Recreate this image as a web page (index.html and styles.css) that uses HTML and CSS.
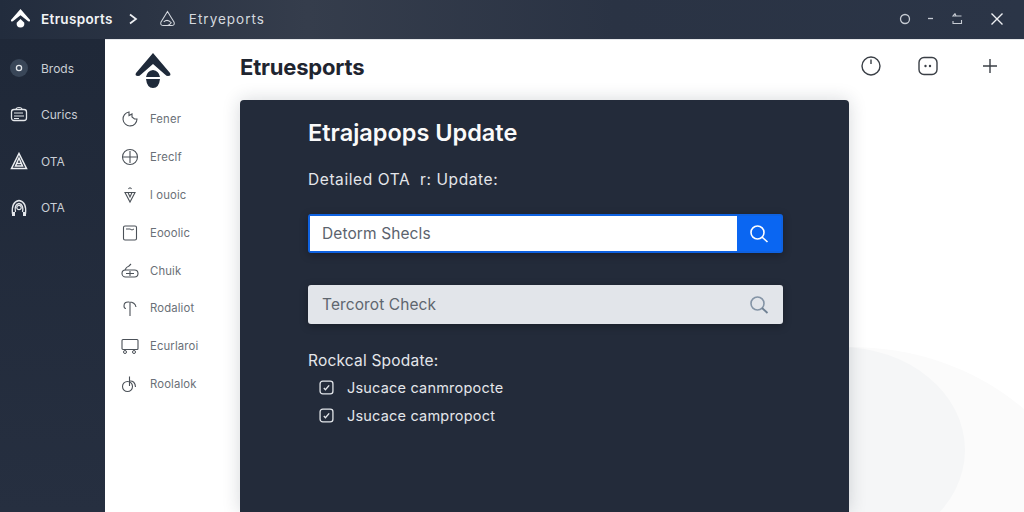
FILE: index.html
```html
<!DOCTYPE html>
<html lang="en">
<head>
<meta charset="utf-8">
<title>Etrusports</title>
<link rel="stylesheet" href="styles.css">
</head>
<body>
<div class="app">
  <header class="topbar">
    <svg class="logo-top" viewBox="0 0 22 22"><path d="M11 1 L21 12.500 Q21.500 14.500 19 14 L11 7.500 L3 14 Q.5 14.500 1 12.500Z" fill="#fff"/><path d="M7 15.500 L11 11.500 L15 15.500 Q15.500 20.500 11 20.500 Q6.500 20.500 7 15.500Z" fill="#fff"/></svg>
    <span class="brand">Etrusports</span>
    <svg class="chev" viewBox="0 0 10 12"><path d="M2 1.500 L8 6 L2 10.500" fill="none" stroke="#eef0f3" stroke-width="1.700"/></svg>
    <svg class="crumb-icon" viewBox="0 0 18 18"><path d="M9 1.500 L16 13 Q17 16.500 13 16.500 L5 16.500 Q1 16.500 2 13Z M5 12.500 Q9 9 13 13.500 Q11 16 9 16.500" fill="none" stroke="#d5d9df" stroke-width="1.100"/></svg>
    <span class="crumb">Etryeports</span>
    <div class="win">
      <svg class="w1" viewBox="0 0 12 12"><circle cx="6" cy="6" r="4.500" fill="none" stroke="#c6cbd3" stroke-width="1.300"/></svg>
      <svg class="w2" viewBox="0 0 7 3"><path d="M1 1.500 H6" stroke="#c6cbd3" stroke-width="1.300"/></svg>
      <svg class="w3" viewBox="0 0 12 12"><path d="M4 .500 L2 3 H10.500 M2 8 V10.500 H10.500 V7 M4 .500 L5 3" fill="none" stroke="#c6cbd3" stroke-width="1.100"/></svg>
      <svg class="w4" viewBox="0 0 14 14"><path d="M1.500 1.500 L12.500 12.500 M12.500 1.500 L1.500 12.500" stroke="#eef0f3" stroke-width="1.400"/></svg>
    </div>
  </header>
  <div class="body">
    <nav class="side">
      <a class="side-item"><svg viewBox="0 0 18 18"><circle cx="9" cy="9" r="9" fill="#394658"/><circle cx="9" cy="9" r="2.600" fill="none" stroke="#e4e7eb" stroke-width="1.300"/></svg>Brods</a>
      <a class="side-item"><svg viewBox="0 0 18 18"><rect x="1.500" y="3.500" width="15" height="11" rx="2.500" fill="none" stroke="#e4e7eb" stroke-width="1.300"/><path d="M6 3.500 Q6 1.500 9 1.500 Q12 1.500 12 3.500 M4 7 H13 M4 10 H14 M4 12.500 H9" fill="none" stroke="#e4e7eb" stroke-width="1.100"/></svg>Curics</a>
      <a class="side-item"><svg viewBox="0 0 18 18"><path d="M9 1.500 L16.500 16.500 H1.500Z M9 6 L12.500 14 H5.500Z M6.500 11.500 H11.500" fill="none" stroke="#eef0f3" stroke-width="1.500"/></svg>OTA</a>
      <a class="side-item"><svg viewBox="0 0 18 18"><path d="M2.500 15 Q1 3 9 1.500 Q17 3 15.500 15 M5.500 13 Q4 5.500 9 4.500 Q14 5.500 12.500 13" fill="none" stroke="#e4e7eb" stroke-width="1.300"/><circle cx="9" cy="8.500" r="2.200" fill="none" stroke="#e4e7eb" stroke-width="1.200"/><path d="M2 13 H5 V17 H2Z M13 13 H16 V17 H13Z" fill="#e4e7eb"/></svg>OTA</a>
    </nav>
    <div class="sheet">
      <span class="blob blob-a"></span>
      <span class="blob blob-b"></span>
      <aside class="sub">
        <svg class="logo-sub" viewBox="0 0 38 38"><path d="M19 1 L36 21 Q37.500 24 34 24 Q32.500 24 31 22.500 L19 12 L7 22.500 Q5.500 24 4 24 Q.500 24 2 21Z" fill="#1f2a3a"/><path d="M12 25 Q13 19 19 18 Q25 19 26 25Z M12 27 H26 Q25 36 19 36 Q13 36 12 27Z" fill="#1f2a3a"/></svg>
        <ul class="sub-list">
          <li><svg viewBox="0 0 18 18"><path d="M8 2 A7 7 0 1 0 16 9 L13.500 9 L11 7 L11 4 L8 5.500Z" fill="none" stroke="#4b5158" stroke-width="1.100"/></svg>Fener</li>
          <li><svg viewBox="0 0 18 18"><circle cx="9" cy="9" r="7.500" fill="none" stroke="#4b5158" stroke-width="1.100"/><path d="M2 9 H16 M9 3 V15" stroke="#4b5158" stroke-width="1.100"/></svg>Ereclf</li>
          <li><svg viewBox="0 0 18 18"><path d="M4 6.500 H14 L9 16Z M7 6.500 L9 11 L11 6.500 M7.500 3 Q9 .500 10.500 3" fill="none" stroke="#4b5158" stroke-width="1.100"/></svg>l ouoic</li>
          <li><svg viewBox="0 0 18 18"><rect x="2.500" y="2" width="13" height="14" rx="1.500" fill="none" stroke="#4b5158" stroke-width="1.100"/><path d="M5 5 H9 L11 6 L13 5" fill="none" stroke="#4b5158"/></svg>Eooolic</li>
          <li><svg viewBox="0 0 18 18"><rect x="1" y="8" width="16" height="7" rx="3.500" fill="none" stroke="#4b5158" stroke-width="1.100"/><path d="M4 8 Q5 5 8 4 L10 2 M5 11.500 H13 M9 9 V14" fill="none" stroke="#4b5158" stroke-width="1.100"/></svg>Chuik</li>
          <li><svg viewBox="0 0 18 18"><path d="M3 7 Q3 2.500 8 3 Q14 3 15 8 M9 3.500 V17 M3 7 Q3 9.500 5 9.500" fill="none" stroke="#4b5158" stroke-width="1.100"/></svg>Rodaliot</li>
          <li><svg viewBox="0 0 18 18"><rect x="1" y="2.500" width="16" height="10" rx="1" fill="none" stroke="#4b5158" stroke-width="1.100"/><circle cx="4" cy="15" r="1.500" fill="none" stroke="#4b5158"/><circle cx="13" cy="15" r="1.500" fill="none" stroke="#4b5158"/></svg>Ecurlaroi</li>
          <li><svg viewBox="0 0 18 18"><circle cx="6.500" cy="11.500" r="5" fill="none" stroke="#4b5158" stroke-width="1.100"/><path d="M8.500 1.500 V11 M8.500 6 Q14 5.500 14.500 12" fill="none" stroke="#4b5158" stroke-width="1.100"/></svg>Roolalok</li>
        </ul>
      </aside>
      <main class="main">
        <div class="main-head">
          <h1>Etruesports</h1>
          <div class="head-icons">
            <svg viewBox="0 0 20 20"><circle cx="10" cy="10" r="9" fill="none" stroke="#3a3f46" stroke-width="1.400"/><path d="M10 3.500 V8" stroke="#3a3f46" stroke-width="1.400"/></svg>
            <svg viewBox="0 0 20 20"><rect x="1" y="1.500" width="18" height="17" rx="5" fill="none" stroke="#3a3f46" stroke-width="1.400"/><circle cx="7.500" cy="10" r="1.200" fill="#3a3f46"/><circle cx="12" cy="10" r="1.200" fill="#3a3f46"/></svg>
            <svg class="plus" viewBox="0 0 20 20"><path d="M10 3 V17 M3 10 H17" stroke="#3a3f46" stroke-width="1.400"/></svg>
          </div>
        </div>
        <section class="panel">
          <h2>Etrajapops Update</h2>
          <p class="sub-title">Detailed OTA &nbsp;r: Update:</p>
          <div class="search primary">
            <span class="field">Detorm Shecls</span>
            <span class="go"><svg viewBox="0 0 20 20"><circle cx="8.500" cy="8.500" r="6.500" fill="none" stroke="#fff" stroke-width="1.600"/><path d="M13 13 L18.500 18" stroke="#fff" stroke-width="1.600"/></svg></span>
          </div>
          <div class="search muted">
            <span class="field">Tercorot Check</span>
            <svg viewBox="0 0 20 20"><circle cx="8.500" cy="8.500" r="6.500" fill="none" stroke="#8494a6" stroke-width="1.600"/><path d="M13 13 L18.500 18" stroke="#6f8093" stroke-width="1.800"/></svg>
          </div>
          <p class="label">Rockcal Spodate:</p>
          <ul class="checks">
            <li><svg viewBox="0 0 14 14"><rect x="1" y="1" width="12" height="12" rx="2.500" fill="none" stroke="#e4e7eb" stroke-width="1.200"/><path d="M4.500 7.500 L6 9 L9.500 5" fill="none" stroke="#e4e7eb" stroke-width="1.300"/></svg>Jsucace canmropocte</li>
            <li><svg viewBox="0 0 14 14"><rect x="1" y="1" width="12" height="12" rx="2.500" fill="none" stroke="#e4e7eb" stroke-width="1.200"/><path d="M4.500 7.500 L6 9 L9.500 5" fill="none" stroke="#e4e7eb" stroke-width="1.300"/></svg>Jsucace campropoct</li>
          </ul>
        </section>
      </main>
    </div>
  </div>
</div>
</body>
</html>
```
FILE: styles.css
```css
* { box-sizing: border-box; }
html, body { margin: 0; height: 100%; }
body { font-family: Inter, "Liberation Sans", sans-serif; background: #242e40; overflow: hidden; }
svg { display: block; flex: none; }
ul { list-style: none; margin: 0; padding: 0; }
h1, h2, p { margin: 0; }

.app { width: 1024px; height: 512px; display: flex; flex-direction: column; overflow: hidden; }

.topbar { height: 39px; flex: none; display: flex; align-items: center; padding: 0 0 2px 10px; background: linear-gradient(90deg, #222c3d 0%, #353d4c 30%, #2a3344 60%, #2b3547 100%); }
.logo-top { width: 21px; height: 21px; }
.brand { margin-left: 10px; font-size: 13.500px; font-weight: 600; color: #f2f4f6; letter-spacing: .35px; }
.chev { width: 10px; height: 12px; margin-left: 15px; }
.crumb-icon { width: 17px; height: 17px; margin-left: 21px; }
.crumb { margin-left: 13px; font-size: 13.500px; color: #d5d9df; letter-spacing: 1px; }
.win { margin-left: auto; display: flex; align-items: center; padding-right: 20px; }
.w1 { width: 12px; height: 12px; }
.w2 { width: 7px; height: 3px; margin-left: 16px; }
.w3 { width: 12px; height: 12px; margin-left: 17px; }
.w4 { width: 14px; height: 14px; margin-left: 27px; }

.body { flex: 1; display: flex; min-height: 0; }

.side { width: 105px; flex: none; background: linear-gradient(180deg, #1f2838 0%, #262f40 100%); padding-top: 6px; display: flex; flex-direction: column; }
.side-item { height: 46.500px; display: flex; align-items: center; gap: 13px; padding-left: 10px; font-size: 12px; color: #c9ced5; }
.side-item svg { width: 18px; height: 18px; }

.sheet { flex: 1; position: relative; display: flex; background: #fff; overflow: hidden; border-top: 1px solid #e6e8eb; }
.blob { position: absolute; border-radius: 50%; }
.blob-a { left: 505px; top: 307px; width: 480px; height: 400px; background: #fbfbfb; }
.blob-b { left: 610px; top: 307px; width: 250px; height: 206px; background: #f5f6f7; }

.sub { width: 135px; flex: none; position: relative; padding-top: 12px; }
.logo-sub { width: 38px; height: 38px; margin-left: 29px; }
.sub-list { margin-top: 10px; }
.sub-list li { height: 37.900px; display: flex; align-items: center; gap: 11px; padding-left: 16px; font-size: 11.300px; color: #6a7077; letter-spacing: .15px; }
.sub-list svg { width: 18px; height: 18px; }

.main { flex: 1; position: relative; display: flex; flex-direction: column; min-width: 0; }
.main-head { height: 60px; flex: none; display: flex; align-items: center; justify-content: space-between; padding-right: 24px; padding-bottom: 6px; }
h1 { font-size: 22px; font-weight: 700; color: #1f2530; letter-spacing: -.2px; }
.head-icons { display: flex; align-items: center; gap: 37px; margin-top: -2px; }
.head-icons svg { width: 20px; height: 20px; }
.head-icons .plus { margin-left: 5px; }

.panel { width: 609px; flex: 1; background: #232b3a; border-radius: 4px 4px 0 0; padding: 20px 0 0 68px; box-shadow: 0 0 18px rgba(30, 40, 55, .18); }
h2 { font-size: 23.500px; font-weight: 600; line-height: 26px; color: #fafafa; }
.sub-title { margin-top: 24px; font-size: 15.500px; line-height: 20px; color: #e4e6ea; letter-spacing: .58px; }
.search { width: 475px; display: flex; align-items: center; border-radius: 3px; box-shadow: 0 2px 8px rgba(0, 0, 0, .3); }
.primary { height: 39px; margin-top: 24px; border: 2px solid #0f62e0; background: #0a66f2; }
.primary .field { flex: 1; height: 100%; background: #fff; display: flex; align-items: center; padding-left: 12px; font-size: 15.500px; color: #5c636d; letter-spacing: .1px; }
.go { width: 44px; display: flex; justify-content: center; }
.go svg { width: 20px; height: 20px; }
.muted { height: 39px; margin-top: 32px; background: #e2e5ea; padding: 0 14px; justify-content: space-between; }
.muted .field { font-size: 15.500px; color: #5f666f; letter-spacing: .1px; }
.muted svg { width: 20px; height: 20px; }
.label { margin-top: 27px; font-size: 15.500px; line-height: 20px; color: #e4e6ea; letter-spacing: .2px; }
.checks { margin-top: 2px; padding-left: 11px; }
.checks li { height: 28px; display: flex; align-items: center; gap: 13px; font-size: 14.500px; color: #e4e6ea; letter-spacing: .2px; }
.checks svg { width: 15px; height: 15px; }
```
